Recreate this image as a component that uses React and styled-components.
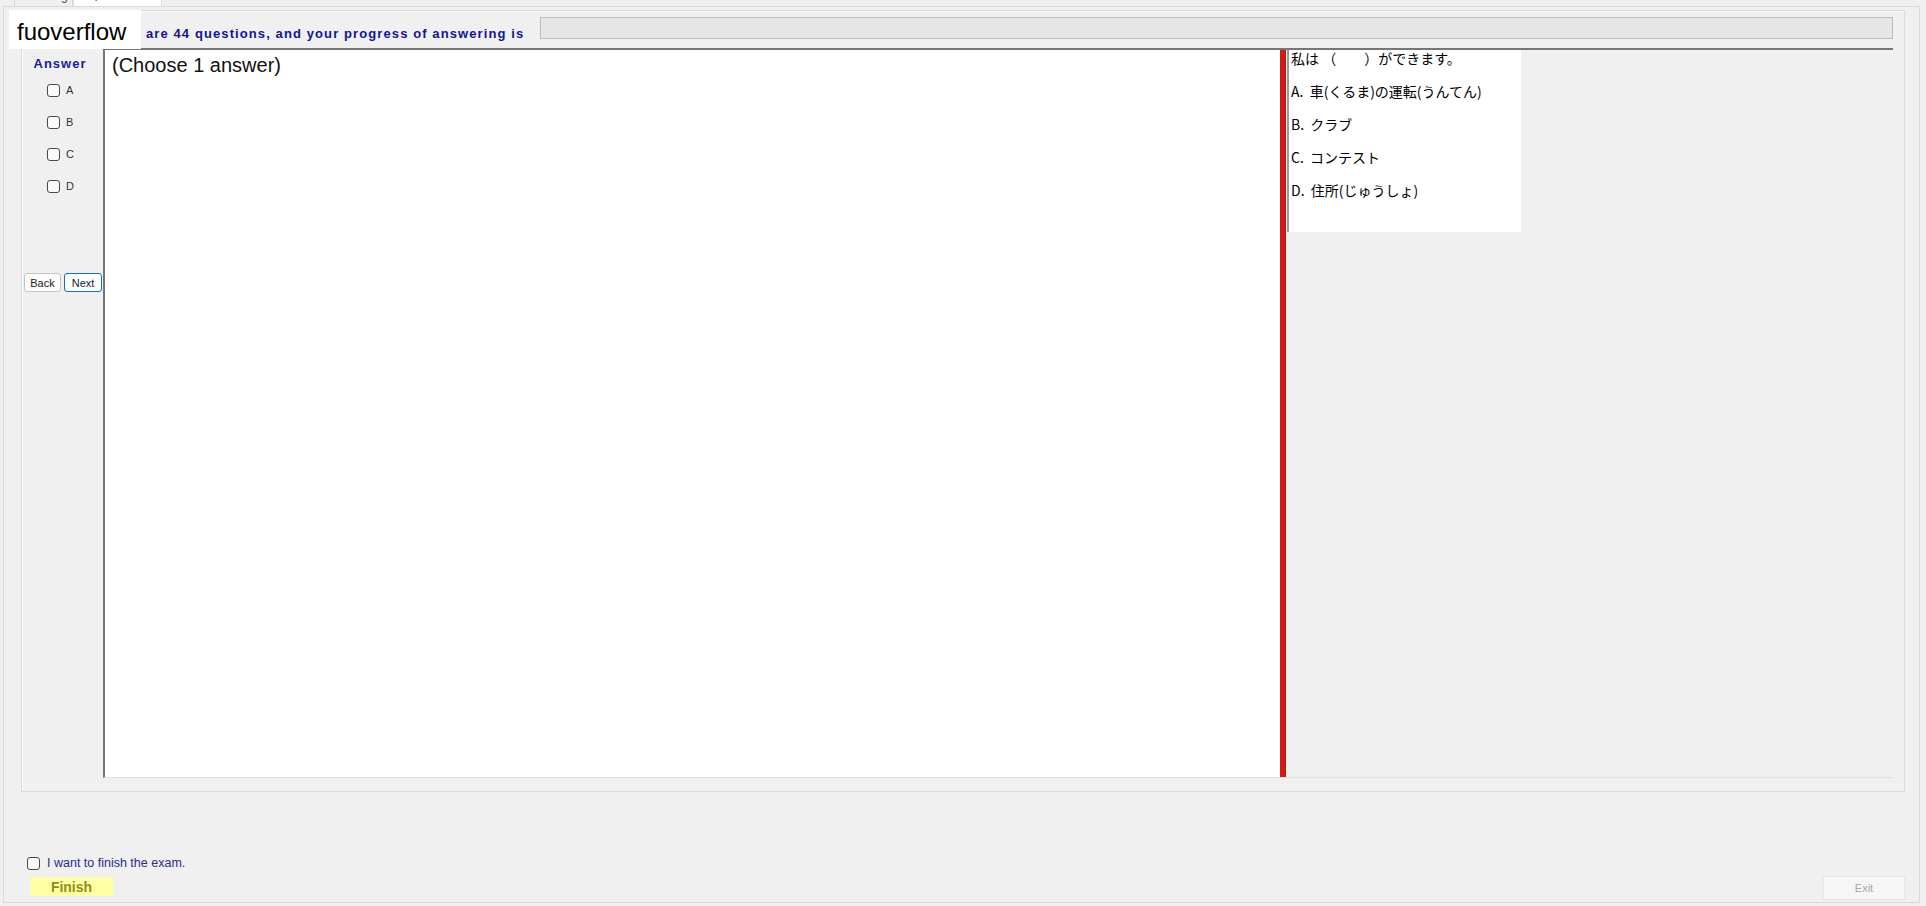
import React from "react";
import styled, { createGlobalStyle } from "styled-components";

const GlobalStyle = createGlobalStyle`
  html, body {
    margin: 0;
    padding: 0;
    background: #f0f0f0;
  }
  body {
    font-family: "Liberation Sans", Arial, sans-serif;
  }
  * {
    box-sizing: border-box;
  }
`;

const Window = styled.div`
  position: relative;
  display: flex;
  flex-direction: column;
  width: 1926px;
  height: 906px;
  overflow: hidden;
  background: #f0f0f0;
`;

// tab headers, mostly scrolled out of view at the top
const TabStrip = styled.div`
  display: flex;
  height: 6px;
  padding-left: 14px;
  overflow: hidden;
  flex: none;
`;

const Tab = styled.div`
  width: ${(p) => p.$w}px;
  height: 6px;
  overflow: hidden;
  background: ${(p) => (p.$active ? "#ffffff" : "#f0f0f0")};
  border-left: 1px solid #d9d9d9;
  border-right: 1px solid #d9d9d9;
  font-size: 12px;
  color: #444;

  span {
    display: block;
    line-height: 13px;
    padding-left: 8px;
    margin-top: ${(p) => (p.$active ? -12 : -10)}px;
  }
`;

const TabPage = styled.div`
  flex: 1;
  display: flex;
  flex-direction: column;
  margin: 0 6px 3px 3px;
  padding: 3px 14px 0 17px;
  border: 1px solid #d9d9d9;
  background: #f0f0f0;
`;

const Group = styled.div`
  flex: none;
  display: flex;
  flex-direction: column;
  height: 782px;
  padding: 0 11px 13px 0;
  border: 1px solid #dcdcdc;
  box-shadow: inset 1px 1px 0 #fafafa;
`;

const HeaderRow = styled.div`
  flex: none;
  display: flex;
  height: 37px;
`;

const CountLabel = styled.div`
  align-self: flex-end;
  margin: 0 0 7px 124px;
  font-size: 13px;
  font-weight: bold;
  letter-spacing: 1.1px;
  line-height: 15px;
  color: #14148f;
  white-space: nowrap;
`;

const Progress = styled.div`
  flex: 1;
  align-self: flex-start;
  height: 22px;
  margin: 6px 0 0 16px;
  background: #e6e6e6;
  border: 1px solid #bcbcbc;
`;

const ContentRow = styled.div`
  flex: 1;
  display: flex;
  min-height: 0;
`;

const AnswerColumn = styled.div`
  flex: none;
  display: flex;
  flex-direction: column;
  width: 81px;
  padding-top: 8px;
`;

const AnswerTitle = styled.div`
  padding-right: 5px;
  text-align: center;
  font-size: 13px;
  font-weight: bold;
  letter-spacing: 1px;
  line-height: 15px;
  color: #1a1aa0;
`;

const OptionList = styled.div`
  margin-top: 3px;
`;

const OptionRow = styled.div`
  display: flex;
  align-items: center;
  height: 32px;
  padding-left: 25px;
`;

const Box = styled.span`
  flex: none;
  width: 13px;
  height: 13px;
  border: 1px solid #4a4a4a;
  border-radius: 3px;
  background: #fbfbfb;
`;

const OptionLetter = styled.span`
  margin-left: 6px;
  font-size: 11px;
  color: #333;
`;

const NavRow = styled.div`
  display: flex;
  gap: 3px;
  margin-top: 71px;
  padding-left: 2px;
`;

const NavButton = styled.button`
  width: ${(p) => p.$w}px;
  height: 19px;
  padding: 0;
  background: #fdfdfd;
  border: 1px solid ${(p) => (p.$focused ? "#1a6fb5" : "#c4c4c4")};
  border-radius: 3px;
  font-family: inherit;
  font-size: 11px;
  color: #222;
`;

const SplitPanel = styled.div`
  flex: 1;
  display: flex;
  border-top: 2px solid #767676;
  border-left: 2px solid #767676;
  border-bottom: 1px solid #e0e0e0;
`;

const TextPane = styled.div`
  flex: none;
  width: 1175px;
  padding: 4px 0 0 7px;
  background: #ffffff;
  font-size: 20px;
  line-height: 23px;
  color: #111;
`;

const Splitter = styled.div`
  flex: none;
  width: 6px;
  background: #dc1515;
  border-right: 1px solid #7a3b2e;
`;

const RightPane = styled.div`
  flex: 1;
  padding-left: 1px;
  background: #f0f0f0;
`;

const QuestionCard = styled.div`
  display: flex;
  flex-direction: column;
  gap: 16px;
  width: 234px;
  height: 182px;
  padding-left: 2px;
  background: #ffffff;
  border-left: 2px solid #9c9c9c;
  font-family: "Noto Sans CJK JP", "Liberation Sans", sans-serif;
  font-size: 14px;
  line-height: 17px;
  color: #000;
`;

const CardLine = styled.div`
  white-space: pre;
`;

const Footer = styled.div`
  flex: 1;
  display: flex;
  justify-content: space-between;
  align-items: flex-end;
  padding-bottom: 2px;
`;

const FinishBlock = styled.div`
  display: flex;
  flex-direction: column;
  padding-bottom: 4px;
`;

const ConfirmRow = styled.label`
  display: flex;
  align-items: center;
  gap: 7px;
  height: 14px;
  margin-left: 6px;
  font-size: 12.5px;
  color: #2a2a8a;
`;

const FinishButton = styled.button`
  width: 83px;
  height: 19px;
  margin: 7px 0 0 9px;
  padding: 0;
  border: none;
  background: #ffffa6;
  font-family: inherit;
  font-size: 14px;
  font-weight: bold;
  color: #8f8f1a;
`;

const ExitButton = styled.button`
  width: 82px;
  height: 24px;
  padding: 0;
  background: #f6f6f6;
  border: 1px solid #e6e6e6;
  font-family: inherit;
  font-size: 11px;
  color: #a6a6a6;
`;

// white label pasted over the header
const Watermark = styled.div`
  position: absolute;
  left: 9px;
  top: 10px;
  width: 132px;
  height: 39px;
  padding: 5px 0 0 8px;
  background: #ffffff;
  font-size: 24px;
  line-height: 33px;
  color: #000;
`;

const options = ["A", "B", "C", "D"];

const questionLines = [
  "私は （　　）ができます。",
  "A.  車(くるま)の運転(うんてん)",
  "B.  クラブ",
  "C.  コンテスト",
  "D.  住所(じゅうしょ)",
];

const App = () => {
  return (
    <>
      <GlobalStyle />
      <Window>
        <TabStrip>
          <Tab $w={59}>
            <span>Reading</span>
          </Tab>
          <Tab $w={89} $active>
            <span>Japanese</span>
          </Tab>
        </TabStrip>
        <TabPage>
          <Group>
            <HeaderRow>
              <CountLabel>
                are 44 questions, and your progress of answering is
              </CountLabel>
              <Progress />
            </HeaderRow>
            <ContentRow>
              <AnswerColumn>
                <AnswerTitle>Answer</AnswerTitle>
                <OptionList>
                  {options.map((o) => (
                    <OptionRow key={o}>
                      <Box />
                      <OptionLetter>{o}</OptionLetter>
                    </OptionRow>
                  ))}
                </OptionList>
                <NavRow>
                  <NavButton $w={37}>Back</NavButton>
                  <NavButton $w={38} $focused>
                    Next
                  </NavButton>
                </NavRow>
              </AnswerColumn>
              <SplitPanel>
                <TextPane>(Choose 1 answer)</TextPane>
                <Splitter />
                <RightPane>
                  <QuestionCard>
                    {questionLines.map((line, idx) => (
                      <CardLine key={idx}>{line}</CardLine>
                    ))}
                  </QuestionCard>
                </RightPane>
              </SplitPanel>
            </ContentRow>
          </Group>
          <Footer>
            <FinishBlock>
              <ConfirmRow>
                <Box />
                I want to finish the exam.
              </ConfirmRow>
              <FinishButton>Finish</FinishButton>
            </FinishBlock>
            <ExitButton>Exit</ExitButton>
          </Footer>
        </TabPage>
        <Watermark>fuoverflow</Watermark>
      </Window>
    </>
  );
};

export default App;
